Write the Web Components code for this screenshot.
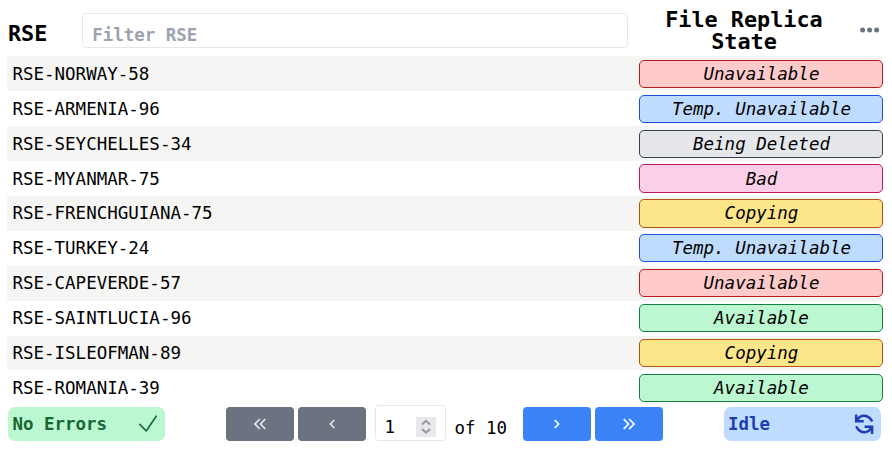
<!DOCTYPE html>
<html lang="en"><head><meta charset="utf-8"><title>RSE</title>
<style>
html,body{margin:0;background:#fff;overflow:hidden}
body{font-family:"DejaVu Sans Mono",monospace;font-size:17.44px;color:#000}
</style></head><body>
<replica-table></replica-table>
<script>
const make=(name,html,init)=>customElements.define(name,class extends HTMLElement{
  constructor(){super();this.attachShadow({mode:'open'})}
  connectedCallback(){this.shadowRoot.innerHTML=html;if(init)init.call(this)}
});

make('state-badge',`<style>
:host{display:flex;box-sizing:border-box;height:28.28px;width:244px;border:1px solid;border-radius:5px;padding-left:1px;align-items:center;justify-content:center;font-style:italic;line-height:26px;white-space:pre}
:host([kind=unavailable]){background:#fecaca;border-color:#b91c1c}
:host([kind=temp]){background:#bfdbfe;border-color:#1d4ed8}
:host([kind=deleted]){background:#e5e7eb;border-color:#374151}
:host([kind=bad]){background:#fbcfe8;border-color:#be185d}
:host([kind=copying]){background:#fde68a;border-color:#b45309}
:host([kind=available]){background:#bbf7d0;border-color:#15803d}
</style><span><slot></slot></span>`);

make('replica-row',`<style>
:host{display:flex;box-sizing:border-box;height:34.891px;align-items:center;padding-left:5.4px;line-height:26px;font-size:17.5px}
:host(:nth-of-type(odd)){background:#f5f5f4}
.name{flex:0 0 626.6px}
state-badge{flex:none;margin-right:-1px}
</style><span class="name"><slot></slot></span><state-badge></state-badge>`,function(){
  const b=this.shadowRoot.querySelector('state-badge');
  b.setAttribute('kind',this.getAttribute('kind'));b.textContent=this.getAttribute('state');
});

make('table-header',`<style>
:host{display:flex;height:56.44px;padding-left:8px;box-sizing:border-box;font-weight:700;font-size:21.8px}
h2{font-size:inherit;margin:0}
.rse{flex:0 0 74px;line-height:26px;padding-top:21px}
.filter{box-sizing:border-box;width:546px;height:35px;margin-top:13px;border:1px solid #e5e7eb;border-radius:3.5px;color:#9ca3af;font-size:17.44px;line-height:26px;padding:8px 0 0 9.3px}
.state{width:210px;margin-left:11px;text-align:center;line-height:21.8px;padding-top:9px}
svg{margin:20px 0 0 10px;width:22px;height:20px}
</style><h2 class="rse">RSE</h2><div class="filter">Filter RSE</div><h2 class="state">File Replica State</h2>
<svg viewBox="0 0 22 20" fill="#6b7280"><circle cx="3.6" cy="10" r="2.5"/><circle cx="10.6" cy="10" r="2.5"/><circle cx="17.6" cy="10" r="2.5"/></svg>`);

make('status-pill',`<style>
:host{display:flex;box-sizing:border-box;width:157px;height:34px;border-radius:7px;align-items:center;justify-content:space-between;font-weight:700;padding:0 4px 0 4.4px;line-height:26px;background:#bbf7d0;color:#166534}
:host([tone=blue]){background:#bfdbfe;color:#1e40af}
</style><span><slot></slot></span><slot name="icon"></slot>`);

make('page-button',`<style>
:host{display:flex;width:68px;height:34px;border-radius:4px;background:#3b82f6;color:#fff;align-items:center;justify-content:center}
:host([disabled]){background:#6b7280;color:#e5e7eb}
:host([back]) svg{transform:scaleX(-1)}
svg{width:16px;height:16px;fill:none;stroke:currentColor;stroke-width:1.7}
</style><svg viewBox="0 0 16 16"><path/></svg>`,function(){
  this.shadowRoot.querySelector('path').setAttribute('d',this.hasAttribute('double')?'M2.7 3 7.5 8 2.7 13M8.2 3 13 8 8.2 13':'M5.7 4 9.6 8 5.7 12');
});

make('page-input',`<style>
:host{display:flex;box-sizing:border-box;width:71px;height:36px;border:1px solid #e5e7eb;border-radius:3.5px;justify-content:space-between;padding:0 9px 0 8.4px}
span{line-height:26px;padding-top:8px}
svg{width:20px;height:20px;margin-top:11px;background:#e9e8ed}
</style><span><slot></slot></span><svg viewBox="0 0 20 20" fill="none" stroke="#96949d" stroke-width="1.9"><path d="M6 7.5 10 3.7 14 7.5M6 12 10 15.8 14 12"/></svg>`);

make('table-footer',`<style>
:host{display:flex;height:35.7px;padding-left:8px;align-items:flex-end}
nav{display:flex;align-items:flex-end;gap:4px;margin:0 61px}
page-input{margin-left:5px}
.count{line-height:26px;width:64px;margin-left:4.5px}
svg{display:block;fill:none;stroke:currentColor}
</style>
<status-pill>No Errors<svg slot="icon" width="26" height="26" viewBox="0 0 26 26" stroke-width="1.6" stroke-linecap="round" stroke-linejoin="round"><path d="M4.800 13.400 11.200 20 21.200 5.200"/></svg></status-pill>
<nav><page-button disabled back double></page-button><page-button disabled back></page-button><page-input>1</page-input><span class="count">of 10</span><page-button></page-button><page-button double></page-button></nav>
<status-pill tone="blue">Idle<svg slot="icon" width="26" height="26" viewBox="0 0 26 26" stroke-width="2.5"><path d="M5.2 3.5v6.7h7.5M5.8 9.8C9.2 2.500 17.600 3.300 21.200 10.500M5.200 15.200c3.500 7.500 12 8.100 15.400 1M13.600 15.800h7.500v7.200"/></svg></status-pill>`);

make('replica-table',`<style>
:host{display:block;width:892px;height:456px;overflow:hidden}
main{margin:0 10px 0 7px}
</style><table-header></table-header><main></main><table-footer></table-footer>`,function(){
  const labels={unavailable:'Unavailable',temp:'Temp. Unavailable',deleted:'Being Deleted',bad:'Bad',copying:'Copying',available:'Available'};
  this.shadowRoot.querySelector('main').innerHTML=[['NORWAY-58','unavailable'],['ARMENIA-96','temp'],['SEYCHELLES-34','deleted'],['MYANMAR-75','bad'],['FRENCHGUIANA-75','copying'],['TURKEY-24','temp'],['CAPEVERDE-57','unavailable'],['SAINTLUCIA-96','available'],['ISLEOFMAN-89','copying'],['ROMANIA-39','available']].map(([n,k])=>`<replica-row kind="${k}" state="${labels[k]}">RSE-${n}</replica-row>`).join('');
});
</script></body></html>
